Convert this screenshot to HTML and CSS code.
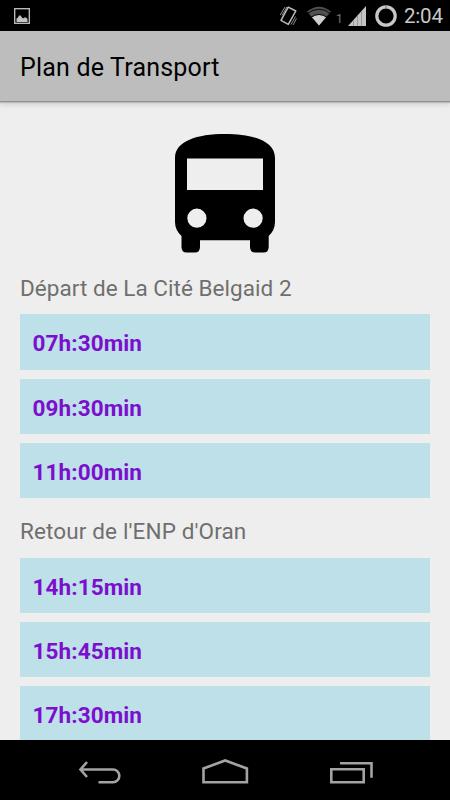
FILE: index.html
```
<!DOCTYPE html>
<html lang="fr">
<head>
    <meta charset="UTF-8">
    <meta name="viewport" content="width=device-width, initial-scale=1.0">
    <title>Plan de Transport</title>
    <link rel="stylesheet" href="styles.css">
</head>
<body>
    <!-- Status bar -->
    <div class="status-bar">
        <svg class="icon-picture" width="16" height="16" viewBox="0 0 16 16">
            <rect x="0.7" y="0.7" width="14.6" height="14.6" fill="none" stroke="#c4c4c4" stroke-width="1.3"/>
            <path d="M2.5 14V10.5L4 9.5L5 7.5H6.5L8 9.5L9 10.5L10.5 9.5H12L13.5 11V14Z" fill="#c4c4c4"/>
        </svg>
        <div class="status-icons">
            <svg class="icon-vibrate" width="20" height="24" viewBox="0 0 20 24">
                <path d="M9.2 3.2L16.8 7L9.3 20.3L2 16.3Z" fill="none" stroke="#bdbdbd" stroke-width="1.5" stroke-linejoin="round"/>
                <path d="M1.2 11L6 3M3 11.5L7.8 3M16.5 12.5L12 20.5M17.5 14.5L14 21" fill="none" stroke="#8c8c8c" stroke-width="1"/>
            </svg>
            <svg class="icon-wifi" width="24" height="20" viewBox="0 0 24 20">
                <path d="M0 5.5Q12-4 24 5.5L12 19.5Z" fill="#505050"/>
                <path d="M5 11.3Q12 6.5 19 11.3L12 19.5Z" fill="#d0d0d0"/>
                <path d="M0 7.8Q12-1.5 24 7.8M3.8 11.4Q12 5.4 20.2 11.4" fill="none" stroke="#000" stroke-width="0.9"/>
            </svg>
            <span class="sim">1</span>
            <svg class="icon-signal" width="18" height="20" viewBox="0 0 18 20">
                <path d="M0 20L18 0V20Z" fill="#c4c4c4"/>
                <path d="M5.5 14V20M9.5 10V20M13.5 5V20" stroke="#999" stroke-width="1"/>
            </svg>
            <svg class="icon-battery" width="22" height="22" viewBox="0 0 22 22">
                <circle cx="11" cy="11" r="9.2" fill="none" stroke="#c8c8c8" stroke-width="3.2"/>
                <path d="M11 0V3.5" stroke="#777" stroke-width="1"/>
            </svg>
            <span class="clock">2:04</span>
        </div>
    </div>

    <header class="app-bar">
        <h1>Plan de Transport</h1>
    </header>

    <main class="content">
        <svg class="bus" width="100" height="120" viewBox="0 0 100 120">
            <path fill="#000" fill-rule="evenodd" d="M0 24C0 7 22 0 50 0S100 7 100 24V88Q100 96 93.7 102V113Q93.7 118.6 88.5 118.6H80.5Q75 118.6 75 113V106.2H25V113Q25 118.6 19.7 118.6H11.7Q6.5 118.6 6.5 113V102Q0 96 0 88ZM12 24.5V56H88V24.5ZM12.3 84.2a9.6 9.6 0 1 0 19.2 0a9.6 9.6 0 1 0-19.2 0ZM68.5 84.2a9.6 9.6 0 1 0 19.2 0a9.6 9.6 0 1 0-19.2 0Z"/>
        </svg>

        <section class="schedule">
            <h2 class="depart">Départ de La Cité Belgaid 2</h2>
            <ul>
                <li>07h:30min</li>
                <li>09h:30min</li>
                <li>11h:00min</li>
            </ul>
        </section>

        <section class="schedule">
            <h2 class="retour">Retour de l'ENP d'Oran</h2>
            <ul>
                <li>14h:15min</li>
                <li>15h:45min</li>
                <li>17h:30min</li>
            </ul>
        </section>
    </main>

    <!-- Navigation buttons -->
    <nav class="nav-bar">
        <svg width="44" height="26" viewBox="0 0 44 26">
            <path d="M9 3L2.5 10.5L9 18M2 10.5H35A6.2 6.2 0 0 1 35 23.2H20.5" fill="none" stroke="#a3a3a3" stroke-width="2.6"/>
        </svg>
        <svg width="46" height="26" viewBox="0 0 46 26">
            <path d="M0.5 23.2V9.5L22.2 1.5L43.9 9.5V23.2Z" fill="none" stroke="#a3a3a3" stroke-width="2.6" overflow="visible"/>
        </svg>
        <svg width="44" height="26" viewBox="0 0 44 26">
            <path d="M1.3 10.3H33.7V23.2H1.3ZM10 4.3H41.5V18.7" fill="none" stroke="#a3a3a3" stroke-width="2.6"/>
        </svg>
    </nav>
</body>
</html>
```
FILE: styles.css
```
/* General Styles */
body {
    font-family: Roboto, 'Liberation Sans', sans-serif;
    margin: 0;
    padding: 0;
    height: 800px;
    display: flex;
    flex-direction: column;
    background: #eeeeee;
    overflow: hidden;
}

svg {
    display: block;
    flex: none;
    overflow: visible;
}

/* Status bar */
.status-bar {
    height: 31px;
    flex: none;
    display: flex;
    justify-content: space-between;
    align-items: center;
    padding: 0 7px 0 14px;
    background: #000;
    color: #c8c8c8;
}

.status-icons {
    display: flex;
    align-items: center;
}

.icon-wifi {
    margin-left: 8px;
}

.sim {
    width: 6px;
    margin: 7px 6px 0 5px;
    font-size: 12px;
    line-height: 12px;
    color: #777;
}

.icon-battery {
    margin-left: 9px;
}

.clock {
    width: 39px;
    margin: 1px 0 0 7px;
    font-size: 20.5px;
    line-height: 24px;
    letter-spacing: -0.2px;
    white-space: nowrap;
}

/* Title bar */
.app-bar {
    height: 71px;
    flex: none;
    box-sizing: border-box;
    padding: 4px 20px 0;
    display: flex;
    align-items: center;
    background: #bdbdbd;
    border-bottom: 1px solid #929292;
    box-shadow: 0 1px 1px #bbb, 0 2px 6px rgba(0, 0, 0, 0.15);
}

.app-bar h1 {
    margin: 0;
    font-size: 25px;
    line-height: 30px;
    font-weight: normal;
    letter-spacing: 0.19px;
    color: #000;
}

/* Timetable */
.content {
    flex: 1;
    min-height: 0;
    padding: 32px 20px 0;
    overflow: hidden;
}

.bus {
    margin: 0 auto 18.5px;
}

.schedule h2 {
    margin: 0;
    height: 41.9px;
    font-size: 22.5px;
    line-height: 30px;
    font-weight: normal;
    color: #6f6f6f;
}

.schedule .depart {
    letter-spacing: 0.04px;
}

.schedule .retour {
    letter-spacing: 0.13px;
}

.schedule ul {
    list-style: none;
    margin: 0 0 17.2px;
    padding: 0;
    display: grid;
    gap: 8.8px;
}

.schedule li {
    height: 55.5px;
    box-sizing: border-box;
    padding: 1px 12.5px 0;
    background: #bde0e9;
    color: #7c0fce;
    font-size: 22.5px;
    line-height: 57px;
    font-weight: bold;
    letter-spacing: 0.1px;
}

/* Navigation buttons */
.nav-bar {
    height: 60px;
    flex: none;
    box-sizing: border-box;
    padding: 3px 76px 0 78px;
    display: flex;
    justify-content: space-between;
    align-items: center;
    background: #000;
}
```
